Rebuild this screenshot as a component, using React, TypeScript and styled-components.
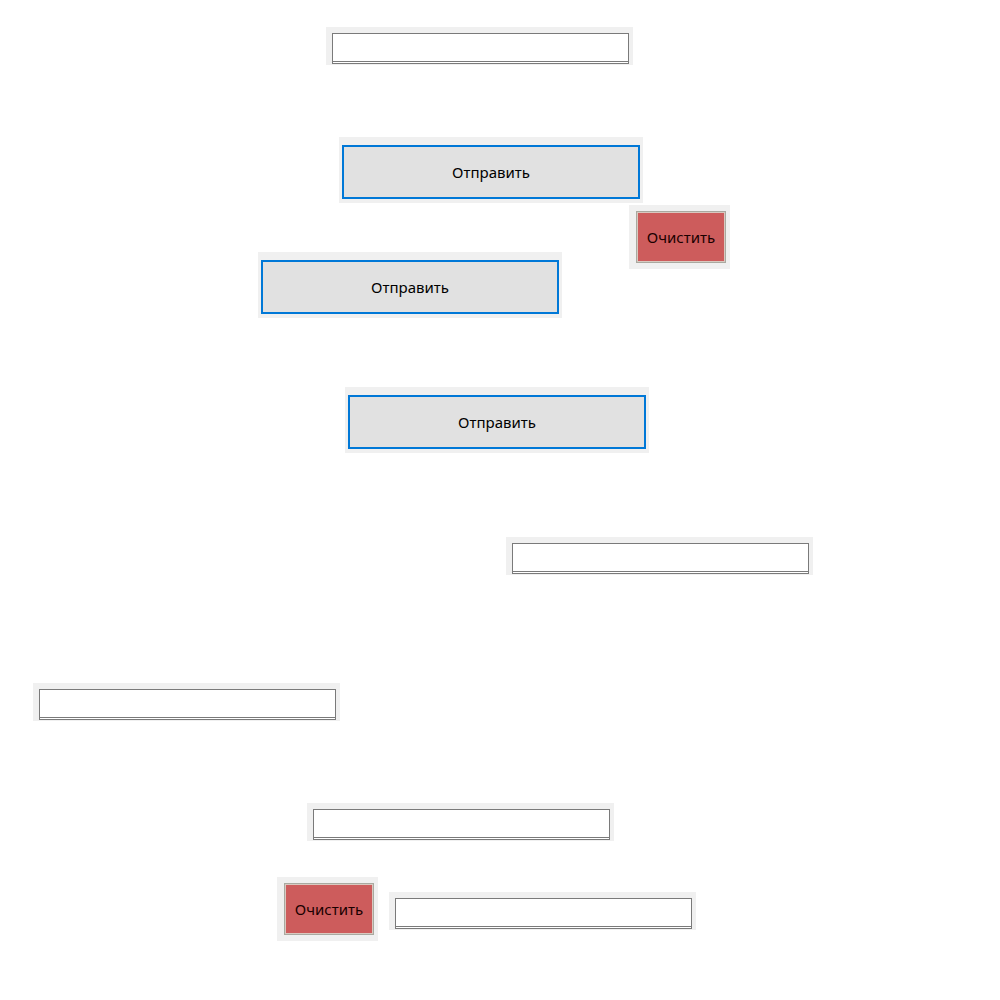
import React from "react";
import styled, { createGlobalStyle } from "styled-components";

const Global = createGlobalStyle`
  html, body { margin: 0; padding: 0; background: #ffffff; }
  body { font-family: "Noto Sans", "Open Sans", sans-serif; }
`;

const Canvas = styled.div`
  position: relative;
  width: 1000px;
  height: 1000px;
  background: #ffffff;
`;

const Frame = styled.div<{ $x: number; $y: number }>`
  position: absolute;
  left: ${(p) => p.$x}px;
  top: ${(p) => p.$y}px;
  background: #f0f0f0;
  display: flex;
`;

const InputFrame = styled(Frame)`
  padding: 6px 4px 1px 6px;
`;

const ButtonFrame = styled(Frame)`
  padding: 8px 3px 4px 3px;
`;

const ClearFrame = styled(Frame)`
  padding: 6px 4px 6px 7px;
`;

const TextField = styled.input`
  box-sizing: border-box;
  width: 297px;
  height: 31px;
  margin: 0;
  padding: 0 4px;
  background: #ffffff;
  border: 1px solid #7a7a7a;
  border-bottom: 3px double #7a7a7a;
  outline: none;
  font-family: "Noto Sans", sans-serif;
  font-size: 14px;
`;

const SendButton = styled.button`
  box-sizing: border-box;
  width: 298px;
  height: 54px;
  margin: 0;
  background: #e1e1e1;
  border: 2px solid #0078d7;
  color: #000000;
  font-family: "Noto Sans", "Open Sans", sans-serif;
  font-size: 15px;
  display: flex;
  align-items: center;
  justify-content: center;
  padding: 0;
`;

const ClearButton = styled.button`
  box-sizing: border-box;
  width: 90px;
  height: 52px;
  margin: 0;
  background: #cd5c5c;
  border: 1px solid #a9a9a0;
  box-shadow: inset 0 0 0 1px #d9c9c0;
  color: #1a0000;
  font-family: "Noto Sans", "Open Sans", sans-serif;
  font-size: 15px;
  display: flex;
  align-items: center;
  justify-content: center;
  padding: 0;
`;

const inputs = [
  { x: 326, y: 27 },
  { x: 506, y: 537 },
  { x: 33, y: 683 },
  { x: 307, y: 803 },
  { x: 389, y: 892 },
];

const sends = [
  { x: 339, y: 137 },
  { x: 258, y: 252 },
  { x: 345, y: 387 },
];

const clears = [
  { x: 629, y: 205 },
  { x: 277, y: 877 },
];

export default function App() {
  return (
    <>
      <Global />
      <Canvas>
        {inputs.map((p, i) => (
          <InputFrame key={`i${i}`} $x={p.x} $y={p.y}>
            <TextField type="text" />
          </InputFrame>
        ))}
        {sends.map((p, i) => (
          <ButtonFrame key={`s${i}`} $x={p.x} $y={p.y}>
            <SendButton>Отправить</SendButton>
          </ButtonFrame>
        ))}
        {clears.map((p, i) => (
          <ClearFrame key={`c${i}`} $x={p.x} $y={p.y}>
            <ClearButton>Очистить</ClearButton>
          </ClearFrame>
        ))}
      </Canvas>
    </>
  );
}
